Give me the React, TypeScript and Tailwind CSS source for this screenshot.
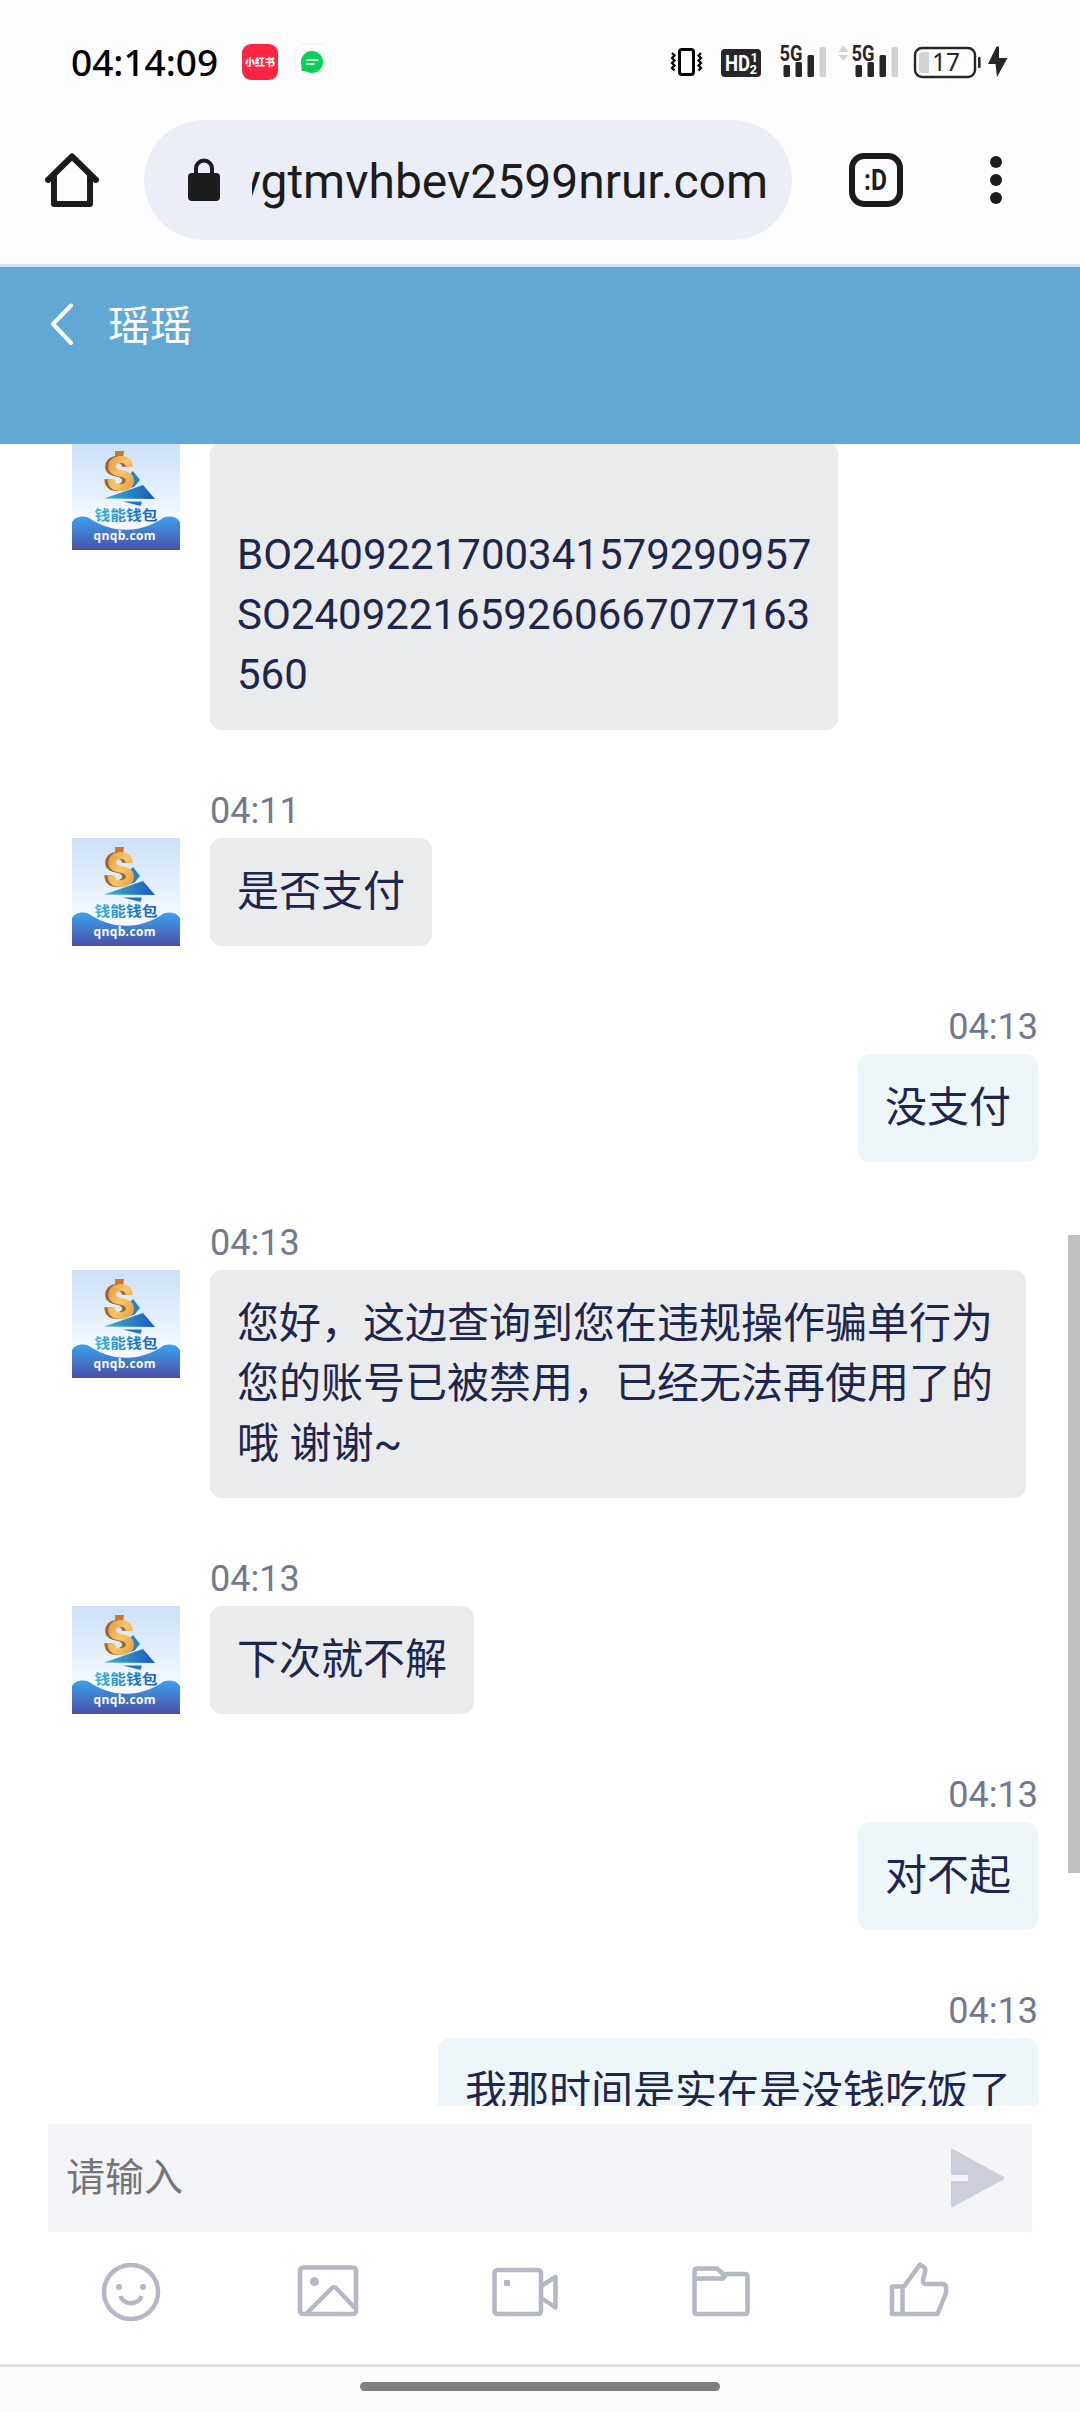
import type { ReactNode } from 'react';

interface Message {
  time?: string;
  text: string;
  mine?: boolean;
  className?: string;
}

const messages: Message[] = [
  { text: '\nBO2409221700341579290957\nSO2409221659260667077163\n560', className: 'w-[628px] pt-[23px] pb-[25px]' },
  { time: '04:11', text: '是否支付' },
  { time: '04:13', text: '没支付', mine: true },
  {
    time: '04:13',
    text: '您好，这边查询到您在违规操作骗单行为\n您的账号已被禁用，已经无法再使用了的\n哦 谢谢~',
    className: 'w-[816px]',
  },
  { time: '04:13', text: '下次就不解' },
  { time: '04:13', text: '对不起', mine: true },
  { time: '04:13', text: '我那时间是实在是没钱吃饭了', mine: true },
];

function Avatar() {
  return (
    <svg width="108" height="108" viewBox="0 0 108 108" className="shrink-0">
      <defs>
        <linearGradient id="sky" x1="0" y1="0" x2="0" y2="1">
          <stop offset="0" stopColor="#cce0f9" />
          <stop offset="0.75" stopColor="#f5faff" />
        </linearGradient>
        <linearGradient id="wave" x1="0" y1="0" x2="0" y2="1">
          <stop offset="0" stopColor="#3aa3ee" />
          <stop offset="1" stopColor="#4d4ea6" />
        </linearGradient>
        <linearGradient id="gold" x1="0" y1="0" x2="1" y2="1">
          <stop offset="0" stopColor="#d98838" />
          <stop offset="0.5" stopColor="#f6c56c" />
          <stop offset="1" stopColor="#dc9434" />
        </linearGradient>
        <linearGradient id="blade" x1="0" y1="0" x2="1" y2="0">
          <stop offset="0" stopColor="#3bb6d4" />
          <stop offset="1" stopColor="#1b58b8" />
        </linearGradient>
      </defs>
      <rect width="108" height="108" fill="url(#sky)" />
      <path d="M56 34L61 29L68 38L62 45L48 49Z" fill="#2485c4" />
      <path d="M43 9H52L51 16H43Z" fill="#c57a2c" />
      <text x="31" y="49" fontSize="48" fontWeight="800" fill="#a9602c" textLength="28" lengthAdjust="spacingAndGlyphs" className="font-[Inter,sans-serif]">S</text>
      <text x="34" y="49" fontSize="48" fontWeight="800" fill="url(#gold)" textLength="29" lengthAdjust="spacingAndGlyphs" className="font-[Inter,sans-serif]">S</text>
      <path d="M32 56.500L71 43L83 57Z" fill="url(#blade)" />
      <path d="M51 59.500H70L68.500 64Z" fill="#2374c6" />
      <path d="M0 80C3 74 14 72 20 78C42 91 66 91 88 78C94 72 105 74 108 80V108H0Z" fill="url(#wave)" />
      <g transform="translate(22.500 78) scale(1 0.83)">
        <text fontSize="15.8" fontWeight="700" fill="url(#blade)" className="font-['Noto_Sans_CJK_SC',sans-serif]">钱能钱包</text>
      </g>
      <text x="21.500" y="98" fontSize="12" fontWeight="700" fill="#fff" textLength="62" className="font-['Open_Sans',sans-serif]">qnqb.com</text>
    </svg>
  );
}

function Bubble({ msg }: { msg: Message }) {
  return (
    <div
      className={`rounded-xl px-[27px] text-[42px] leading-[60px] whitespace-pre text-[#1d264e] ${
        msg.mine ? 'bg-[#eef6fa]' : 'bg-[#eaebed]'
      } ${msg.className ?? ''} ${msg.time ? 'py-6' : ''}`}
    >
      {msg.text}
    </div>
  );
}

function MessageRow({ msg }: { msg: Message }) {
  return (
    <div className={`flex flex-col ${msg.mine ? 'items-end' : 'items-start'}`}>
      {msg.time && (
        <div className={`mt-[54px] h-[54px] text-[36px] leading-[54px] text-[#72788f] ${msg.mine ? '' : 'ml-[138px]'}`}>
          {msg.time}
        </div>
      )}
      <div className="flex items-start gap-[30px]">
        {!msg.mine && <Avatar />}
        <Bubble msg={msg} />
      </div>
    </div>
  );
}

function Signal() {
  return (
    <svg width="48" height="34" viewBox="0 0 48 34" className="overflow-visible">
      <text x="-0.5" y="16.500" fontSize="21.500" fontWeight="700" fill="#262628" textLength="23" lengthAdjust="spacingAndGlyphs" className="font-[Roboto,sans-serif]">5G</text>
      <g fill="#262628">
        <rect x="3.500" y="21" width="6.500" height="12" rx="1.500" />
        <rect x="15.500" y="18" width="6.500" height="15" rx="1.500" />
        <rect x="27.500" y="11" width="6.500" height="22" rx="1.500" />
      </g>
      <rect x="39.500" y="3" width="6.500" height="30" rx="1.500" fill="#d2d2d4" />
    </svg>
  );
}

function StatusBar() {
  return (
    <div className="flex h-[120px] shrink-0 items-start pt-[44px] pl-[71px]">
      <div className="w-[171px] font-['Noto_Sans',sans-serif] text-[37px] leading-[36px] font-medium text-black">04:14:09</div>
      <div className="flex size-9 items-center justify-center rounded-[9px] bg-[#fe2543]">
        <span className="font-['Noto_Sans_CJK_SC',sans-serif] text-[10px] leading-none font-black text-white">小红书</span>
      </div>
      <svg width="36" height="36" viewBox="0 0 36 36" className="ml-[17px]">
        <rect x="0.5" y="0.5" width="35" height="35" rx="9" fill="#fff" stroke="#f4f4f6" />
        <circle cx="17" cy="18" r="11" fill="#0bcf57" />
        <path d="M6.500 18V27H17Z" fill="#0bcf57" />
        <path d="M12 16H22.500M12 20H18.500" stroke="#d9ffe6" strokeWidth="2" strokeLinecap="round" />
      </svg>
      <svg width="34" height="36" viewBox="0 0 34 36" className="ml-[339px]" fill="none" stroke="#000">
        <rect x="9.500" y="5.500" width="14" height="25" rx="2.500" strokeWidth="3" />
        <path d="M2 9L4.500 11.500L2 14L4.500 16.500L2 19L4.500 21.500L2 24L4.500 26.500M31 9L28.500 11.500L31 14L28.500 16.500L31 19L28.500 21.500L31 24L28.500 26.500" strokeWidth="2.200" />
      </svg>
      <svg width="40" height="36" viewBox="0 0 40 36" className="ml-[17px] font-[Roboto,sans-serif]">
        <rect y="5" width="40" height="28" rx="4" fill="#262628" />
        <g fill="#fff" fontWeight="700">
          <text x="4" y="27" fontSize="22.500" textLength="25" lengthAdjust="spacingAndGlyphs">HD</text>
          <text x="29.500" y="18" fontSize="13">1</text>
          <text x="28.500" y="30" fontSize="13">2</text>
        </g>
      </svg>
      <div className="ml-[19px]">
        <Signal />
      </div>
      <svg width="12" height="36" viewBox="0 0 12 36" className="ml-[10px]" fill="#d2d2d4">
        <path d="M0.500 8L5.500 1.500L10.500 8ZM0.500 11L5.500 16.500L10.500 11Z" />
      </svg>
      <div className="ml-[2px]">
        <Signal />
      </div>
      <svg width="98" height="36" viewBox="0 0 98 36" className="ml-[13px]">
        <rect x="2" y="4" width="60" height="29" rx="7" fill="none" stroke="#262628" strokeWidth="2.400" />
        <path d="M10 8H16V29H10Q6 29 6 25V12Q6 8 10 8Z" fill="#d2d2d4" />
        <rect x="65" y="13" width="2.600" height="11" rx="1" fill="#262628" />
        <text x="19" y="27" fontSize="24.500" fill="#262628" className="font-['Noto_Sans',sans-serif]">17</text>
        <path d="M83.500 2.500L75 20H82.500L84 33L94.500 14H86V2.500Z" fill="#262628" />
      </svg>
    </div>
  );
}

function AddressBar() {
  return (
    <div className="flex h-[144px] shrink-0 items-start">
      <svg width="60" height="60" viewBox="0 0 60 60" className="mt-[30px] ml-[42px]" fill="none" stroke="#1b1c1e" strokeWidth="6" strokeLinecap="round" strokeLinejoin="round">
        <path d="M6 30L30 6.500L54 30M12 27V54H48V27" />
      </svg>
      <div className="ml-[42px] flex h-[120px] w-[648px] items-center rounded-full bg-[#ebeef6]">
        <svg width="32" height="44" viewBox="0 0 32 44" className="ml-[44px] shrink-0">
          <path d="M8 16V10.500a8 8 0 0 1 16 0V16" fill="none" stroke="#1b1c1e" strokeWidth="4" />
          <rect y="15" width="32" height="28" rx="4" fill="#1b1c1e" />
        </svg>
        <div className="mt-1 ml-8 flex w-[516px] justify-end overflow-hidden text-[48px] leading-[60px] whitespace-nowrap text-[#1b1c1e]">
          ygtmvhbev2599nrur.com
        </div>
      </div>
      <div className="mt-[33px] ml-[57px] flex size-[54px] items-center justify-center rounded-[15px] border-[6px] border-[#1b1c1e]">
        <span className="scale-x-[0.85] text-[29px] leading-none font-bold text-[#1b1c1e]">:D</span>
      </div>
      <div className="mt-[36px] ml-[87px] flex flex-col gap-[6px]">
        <i className="size-3 rounded-full bg-[#1b1c1e]" />
        <i className="size-3 rounded-full bg-[#1b1c1e]" />
        <i className="size-3 rounded-full bg-[#1b1c1e]" />
      </div>
    </div>
  );
}

function ToolIcon({ children }: { children: ReactNode }) {
  return (
    <div className="flex justify-center">
      <svg width="72" height="60" viewBox="0 0 72 60" fill="none" stroke="#b4b8c5" strokeWidth="4.500" strokeLinejoin="round">
        {children}
      </svg>
    </div>
  );
}

function Composer() {
  return (
    <div className="h-[258px] shrink-0 bg-white pt-[18px]">
      <div className="mx-12 flex h-[108px] items-center justify-between bg-[#f2f4f8] pr-[27px] pl-[18px]">
        <span className="text-[39px] leading-[60px] text-[#757575]">请输入</span>
        <svg width="54" height="60" viewBox="0 0 54 60" fill="#cccfda">
          <path d="M0 2Q0 0 2 1L53 29Q54 30 53 31L2 59Q0 60 0 58V33H17V27H0Z" />
        </svg>
      </div>
      <div className="mt-[30px] ml-[33px] grid w-[984px] grid-cols-5">
        <ToolIcon>
          <circle cx="36" cy="30" r="27" />
          <circle cx="24" cy="25" r="3" fill="#b4b8c5" stroke="none" />
          <circle cx="48" cy="25" r="3" fill="#b4b8c5" stroke="none" />
          <path d="M25.500 34a10.700 9 0 0 0 21 0" />
        </ToolIcon>
        <ToolIcon>
          <rect x="8" y="5.500" width="56" height="46.500" rx="3" />
          <circle cx="22.500" cy="19.500" r="4.500" fill="#b4b8c5" stroke="none" />
          <path d="M15 51L40 26Q42 24.500 44 26L63 46" />
        </ToolIcon>
        <ToolIcon>
          <rect x="5.500" y="8" width="46.500" height="44" rx="3" />
          <path d="M53 23.500L66.500 15V45.500L53 36.500" />
          <rect x="15" y="18" width="6" height="6" fill="#b4b8c5" stroke="none" />
        </ToolIcon>
        <ToolIcon>
          <path d="M8.500 9Q8.500 6.500 11 6.500H31L37 12H58.500Q61.500 12 61.500 15V49Q61.500 52 58.500 52H11Q8.500 52 8.500 49ZM9 16.500H37L40.500 12" />
        </ToolIcon>
        <ToolIcon>
          <path d="M9 24.500H21L37 2.500L40 4.500Q43 6 42 10L40 18Q39.500 22 43 22H60Q63 22 63 26V31L54.500 52H9ZM19.500 25V52" />
        </ToolIcon>
      </div>
    </div>
  );
}

export default function App() {
  return (
    <div className="flex h-[2412px] w-[1080px] flex-col overflow-hidden bg-[#fdfcff] font-[Roboto,'Noto_Sans_CJK_SC',sans-serif]">
      <StatusBar />
      <AddressBar />
      <div className="h-[3px] shrink-0 bg-[#d5e2ef]" />
      <header className="flex h-[177px] shrink-0 items-start bg-[#62a8d4] pt-[27px] pl-[48px]">
        <svg width="27" height="60" viewBox="0 0 27 60" fill="none" stroke="#fff" strokeWidth="4" strokeLinecap="round" strokeLinejoin="round">
          <path d="M23 11.500L5 30L23 49" />
        </svg>
        <h1 className="mt-[3px] ml-[33px] text-[42px] leading-[60px] text-white">瑶瑶</h1>
      </header>

      <main className="relative h-[1662px] shrink-0 overflow-hidden bg-white">
        <div className="-mt-[2px] pr-[42px] pl-[72px]">
          {messages.map((msg, i) => (
            <MessageRow key={i} msg={msg} />
          ))}
        </div>
        <div className="absolute top-[791px] right-0 h-[638px] w-3 bg-[#c1c1c1]" />
      </main>

      <Composer />

      <footer className="flex flex-1 justify-center border-t-[3px] border-[#dfe1e4] bg-[#fcfcfe] pt-[15px]">
        <div className="h-[9px] w-[360px] rounded-full bg-[#7f7f7f]" />
      </footer>
    </div>
  );
}
